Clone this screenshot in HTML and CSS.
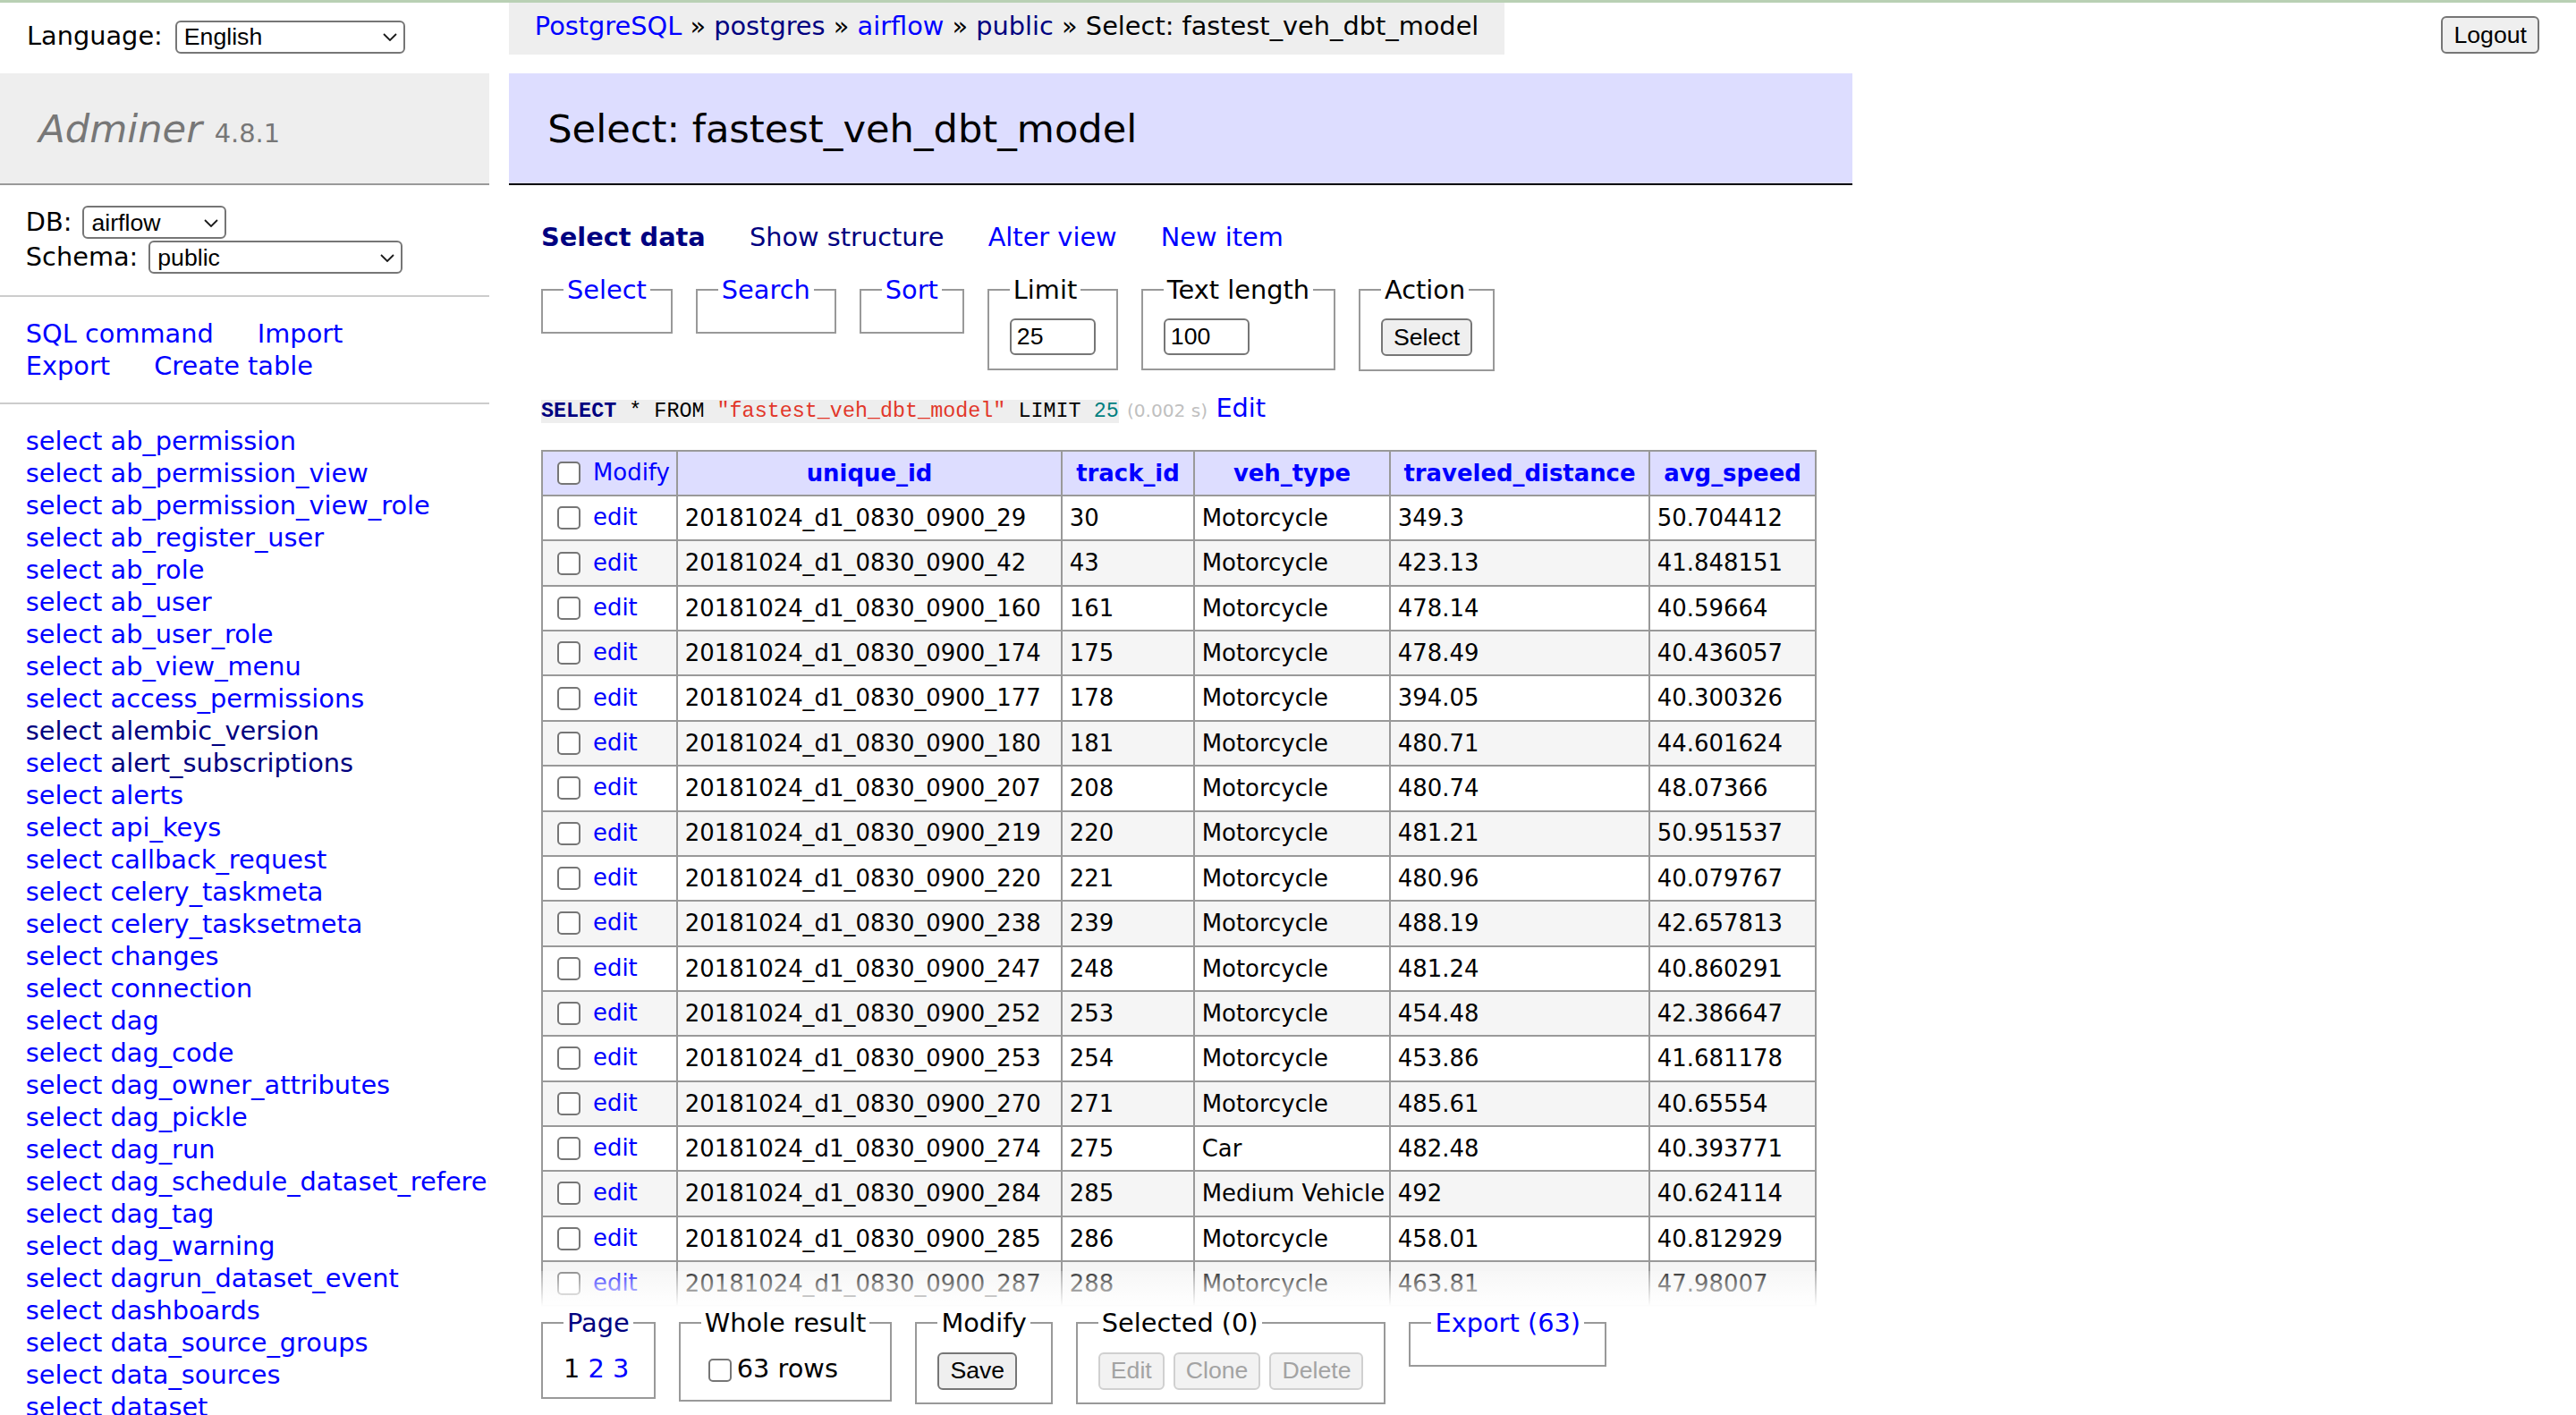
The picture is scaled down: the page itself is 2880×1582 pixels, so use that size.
FILE: index.html
```html
<!DOCTYPE html>
<html lang="en">
<head>
<meta charset="utf-8">
<title>Select: fastest_veh_dbt_model - PostgreSQL - Adminer</title>
<link rel="stylesheet" href="styles.css">
</head>
<body>
<div class="page">
  <aside class="menu">
    <form class="lang">
      <span class="lang-label">Language:</span>
      <span class="sel sel-lang"><select><option>English</option></select><svg viewBox="0 0 16 9"><path d="M1 1l7 7 7-7"/></svg></span>
    </form>
    <h1><a class="h1link" href="#">Adminer</a> <span class="version">4.8.1</span></h1>
    <form class="dbs">
      <div class="dbrow"><span>DB:</span><span class="sel sel-db"><select><option>airflow</option></select><svg viewBox="0 0 16 9"><path d="M1 1l7 7 7-7"/></svg></span></div>
      <div class="dbrow"><span>Schema:</span><span class="sel sel-schema"><select><option>public</option></select><svg viewBox="0 0 16 9"><path d="M1 1l7 7 7-7"/></svg></span></div>
    </form>
    <p class="side-links"><a href="#">SQL command</a> <a href="#">Import</a><br><a href="#">Export</a> <a href="#">Create table</a></p>
    <ul class="tables">
      <li><a href="#">select</a> <a href="#">ab_permission</a></li>
      <li><a href="#">select</a> <a href="#">ab_permission_view</a></li>
      <li><a href="#">select</a> <a href="#">ab_permission_view_role</a></li>
      <li><a href="#">select</a> <a href="#">ab_register_user</a></li>
      <li><a href="#">select</a> <a href="#">ab_role</a></li>
      <li><a href="#">select</a> <a href="#">ab_user</a></li>
      <li><a href="#">select</a> <a href="#">ab_user_role</a></li>
      <li><a href="#">select</a> <a href="#">ab_view_menu</a></li>
      <li><a href="#">select</a> <a href="#">access_permissions</a></li>
      <li><a class="v" href="#">select</a> <a class="v" href="#">alembic_version</a></li>
      <li><a href="#">select</a> <a class="v" href="#">alert_subscriptions</a></li>
      <li><a href="#">select</a> <a href="#">alerts</a></li>
      <li><a href="#">select</a> <a href="#">api_keys</a></li>
      <li><a href="#">select</a> <a href="#">callback_request</a></li>
      <li><a href="#">select</a> <a href="#">celery_taskmeta</a></li>
      <li><a href="#">select</a> <a href="#">celery_tasksetmeta</a></li>
      <li><a href="#">select</a> <a href="#">changes</a></li>
      <li><a href="#">select</a> <a href="#">connection</a></li>
      <li><a href="#">select</a> <a href="#">dag</a></li>
      <li><a href="#">select</a> <a href="#">dag_code</a></li>
      <li><a href="#">select</a> <a href="#">dag_owner_attributes</a></li>
      <li><a href="#">select</a> <a href="#">dag_pickle</a></li>
      <li><a href="#">select</a> <a href="#">dag_run</a></li>
      <li><a href="#">select</a> <a href="#">dag_schedule_dataset_reference</a></li>
      <li><a href="#">select</a> <a href="#">dag_tag</a></li>
      <li><a href="#">select</a> <a href="#">dag_warning</a></li>
      <li><a href="#">select</a> <a href="#">dagrun_dataset_event</a></li>
      <li><a href="#">select</a> <a href="#">dashboards</a></li>
      <li><a href="#">select</a> <a href="#">data_source_groups</a></li>
      <li><a href="#">select</a> <a href="#">data_sources</a></li>
      <li><a href="#">select</a> <a href="#">dataset</a></li>
    </ul>
  </aside>

  <main class="content">
    <nav class="breadcrumb"><a href="#">PostgreSQL</a> » <a class="v" href="#">postgres</a> » <a href="#">airflow</a> » <a class="v" href="#">public</a> » Select: fastest_veh_dbt_model</nav>
    <h2>Select: fastest_veh_dbt_model</h2>
    <div class="main">
      <p class="nav-links"><a class="v active" href="#">Select data</a> <a class="v" href="#">Show structure</a> <a href="#">Alter view</a> <a href="#">New item</a></p>

      <form class="filters">
        <fieldset class="fs-empty"><legend><a href="#">Select</a></legend></fieldset>
        <fieldset class="fs-empty"><legend><a href="#">Search</a></legend></fieldset>
        <fieldset class="fs-empty"><legend><a href="#">Sort</a></legend></fieldset>
        <fieldset><legend>Limit</legend><div class="fs-body"><input class="num" type="text" value="25"></div></fieldset>
        <fieldset><legend>Text length</legend><div class="fs-body"><input class="num" type="text" value="100"></div></fieldset>
        <fieldset><legend>Action</legend><div class="fs-body"><button type="button" class="btn">Select</button></div></fieldset>
      </form>

      <p class="sql"><code><b class="kw">SELECT</b> * FROM <span class="quo">"fastest_veh_dbt_model"</span> LIMIT <span class="numlit">25</span></code> <span class="time">(0.002 s)</span> <a href="#">Edit</a></p>

      <form class="results">
        <table class="data">
          <colgroup>
            <col class="c1"><col class="c2"><col class="c3"><col class="c4"><col class="c5"><col class="c6">
          </colgroup>
          <thead>
            <tr><td><input class="cb" type="checkbox"> <a href="#">Modify</a></td><th><a href="#">unique_id</a></th><th><a href="#">track_id</a></th><th><a href="#">veh_type</a></th><th><a href="#">traveled_distance</a></th><th><a href="#">avg_speed</a></th></tr>
          </thead>
          <tbody>
            <tr><td><input class="cb" type="checkbox"> <a href="#">edit</a></td><td>20181024_d1_0830_0900_29</td><td>30</td><td>Motorcycle</td><td>349.3</td><td>50.704412</td></tr>
            <tr><td><input class="cb" type="checkbox"> <a href="#">edit</a></td><td>20181024_d1_0830_0900_42</td><td>43</td><td>Motorcycle</td><td>423.13</td><td>41.848151</td></tr>
            <tr><td><input class="cb" type="checkbox"> <a href="#">edit</a></td><td>20181024_d1_0830_0900_160</td><td>161</td><td>Motorcycle</td><td>478.14</td><td>40.59664</td></tr>
            <tr><td><input class="cb" type="checkbox"> <a href="#">edit</a></td><td>20181024_d1_0830_0900_174</td><td>175</td><td>Motorcycle</td><td>478.49</td><td>40.436057</td></tr>
            <tr><td><input class="cb" type="checkbox"> <a href="#">edit</a></td><td>20181024_d1_0830_0900_177</td><td>178</td><td>Motorcycle</td><td>394.05</td><td>40.300326</td></tr>
            <tr><td><input class="cb" type="checkbox"> <a href="#">edit</a></td><td>20181024_d1_0830_0900_180</td><td>181</td><td>Motorcycle</td><td>480.71</td><td>44.601624</td></tr>
            <tr><td><input class="cb" type="checkbox"> <a href="#">edit</a></td><td>20181024_d1_0830_0900_207</td><td>208</td><td>Motorcycle</td><td>480.74</td><td>48.07366</td></tr>
            <tr><td><input class="cb" type="checkbox"> <a href="#">edit</a></td><td>20181024_d1_0830_0900_219</td><td>220</td><td>Motorcycle</td><td>481.21</td><td>50.951537</td></tr>
            <tr><td><input class="cb" type="checkbox"> <a href="#">edit</a></td><td>20181024_d1_0830_0900_220</td><td>221</td><td>Motorcycle</td><td>480.96</td><td>40.079767</td></tr>
            <tr><td><input class="cb" type="checkbox"> <a href="#">edit</a></td><td>20181024_d1_0830_0900_238</td><td>239</td><td>Motorcycle</td><td>488.19</td><td>42.657813</td></tr>
            <tr><td><input class="cb" type="checkbox"> <a href="#">edit</a></td><td>20181024_d1_0830_0900_247</td><td>248</td><td>Motorcycle</td><td>481.24</td><td>40.860291</td></tr>
            <tr><td><input class="cb" type="checkbox"> <a href="#">edit</a></td><td>20181024_d1_0830_0900_252</td><td>253</td><td>Motorcycle</td><td>454.48</td><td>42.386647</td></tr>
            <tr><td><input class="cb" type="checkbox"> <a href="#">edit</a></td><td>20181024_d1_0830_0900_253</td><td>254</td><td>Motorcycle</td><td>453.86</td><td>41.681178</td></tr>
            <tr><td><input class="cb" type="checkbox"> <a href="#">edit</a></td><td>20181024_d1_0830_0900_270</td><td>271</td><td>Motorcycle</td><td>485.61</td><td>40.65554</td></tr>
            <tr><td><input class="cb" type="checkbox"> <a href="#">edit</a></td><td>20181024_d1_0830_0900_274</td><td>275</td><td>Car</td><td>482.48</td><td>40.393771</td></tr>
            <tr><td><input class="cb" type="checkbox"> <a href="#">edit</a></td><td>20181024_d1_0830_0900_284</td><td>285</td><td>Medium Vehicle</td><td>492</td><td>40.624114</td></tr>
            <tr><td><input class="cb" type="checkbox"> <a href="#">edit</a></td><td>20181024_d1_0830_0900_285</td><td>286</td><td>Motorcycle</td><td>458.01</td><td>40.812929</td></tr>
            <tr><td><input class="cb" type="checkbox"> <a href="#">edit</a></td><td>20181024_d1_0830_0900_287</td><td>288</td><td>Motorcycle</td><td>463.81</td><td>47.98007</td></tr>
          </tbody>
        </table>

        <div class="footer">
          <div class="footer-inner">
            <fieldset><legend><a class="v" href="#">Page</a></legend><div class="fs-text">1 <a href="#">2</a> <a href="#">3</a></div></fieldset>
            <fieldset><legend>Whole result</legend><label class="fs-text"><input class="cb" type="checkbox">63 rows</label></fieldset>
            <fieldset><legend>Modify</legend><div class="fs-body"><button type="button" class="btn">Save</button></div></fieldset>
            <fieldset><legend>Selected (0)</legend><div class="fs-body gap"><button type="button" class="btn" disabled>Edit</button><button type="button" class="btn" disabled>Clone</button><button type="button" class="btn" disabled>Delete</button></div></fieldset>
            <fieldset class="fs-empty"><legend><a href="#">Export (63)</a></legend></fieldset>
          </div>
        </div>
      </form>
    </div>
  </main>

  <form class="logout"><button type="button" class="btn">Logout</button></form>
</div>
</body>
</html>
```

FILE: styles.css
```css
html, body {
  margin: 0;
}

body {
  font: 28.8px/1.25 "DejaVu Sans", Verdana, sans-serif;
  color: #000;
  background: #fff;
  border-top: 3px solid #b9d0b4;
}

a {
  color: blue;
  text-decoration: none;
}

a.v {
  color: navy;
}

.page {
  display: grid;
  grid-template-columns: 547px auto 1fr;
  column-gap: 22px;
  align-items: start;
}

/* ---------- sidebar ---------- */
.menu {
  width: 547px;
  padding-bottom: 60px;
}

.lang {
  display: flex;
  align-items: center;
  height: 79px;
  box-sizing: border-box;
  padding: 0 0 3px 30px;
  margin: 0;
}

.lang-label {
  margin-right: 14px;
}

.sel {
  position: relative;
  display: inline-block;
}

.sel select {
  appearance: none;
  -webkit-appearance: none;
  display: block;
  box-sizing: border-box;
  font: 26.67px "Liberation Sans", Arial, sans-serif;
  color: #000;
  background: #fff;
  border: 2px solid #767676;
  border-radius: 6px;
  height: 37px;
  padding: 0 36px 0 8px;
  margin: 0;
}

.sel svg {
  position: absolute;
  right: 9px;
  top: 50%;
  width: 16px;
  height: 9px;
  margin-top: -4px;
  pointer-events: none;
  fill: none;
  stroke: #1a1a1a;
  stroke-width: 1.8;
}

.sel-lang select { width: 257px; }
.sel-db select { width: 161px; }
.sel-schema select { width: 284px; }

h1 {
  margin: 0;
  font-size: 43.2px;
  line-height: 54px;
  padding: 34.56px 43.2px;
  border-bottom: 2px solid #999;
  background: #eee;
  font-weight: normal;
  color: #777;
  white-space: nowrap;
}

.h1link {
  color: #777;
  font-style: italic;
}

.version {
  font-size: 28.9px;
  line-height: 1;
  color: #777;
}

.dbs {
  margin: 0;
  padding: 22px 28.8px 23px;
  border-bottom: 2px solid #ccc;
}

.dbrow {
  display: flex;
  align-items: center;
  gap: 12px;
  height: 39px;
}

.side-links {
  margin: 0;
  padding: 23px 28.8px;
  border-bottom: 2px solid #ccc;
  line-height: 36px;
}

.side-links a {
  margin-right: 40px;
  white-space: nowrap;
}

.tables {
  margin: 0;
  padding: 23px 28.8px;
  list-style: none;
  white-space: nowrap;
  overflow: hidden;
  line-height: 36px;
}

/* ---------- content ---------- */
.content {
  min-width: 0;
}

.breadcrumb {
  width: fit-content;
  background: #eee;
  height: 57.6px;
  line-height: 53px;
  padding: 0 28.8px;
  white-space: nowrap;
  box-sizing: border-box;
}

h2 {
  margin: 21.4px 0 40px;
  font-size: 43.2px;
  line-height: 54px;
  padding: 34.56px 43.2px;
  border-bottom: 2px solid #000;
  background: #ddf;
  font-weight: normal;
  white-space: nowrap;
}

.main {
  padding: 0 40px 0 36px;
}

.nav-links {
  margin: 0;
  line-height: 36px;
  white-space: nowrap;
}

.nav-links a {
  margin-right: 40px;
}

.active {
  font-weight: bold;
}

.filters {
  display: flex;
  align-items: flex-start;
  gap: 26px;
  margin: 23px 0 0;
}

fieldset {
  margin: 0;
  padding: 14.4px 23px;
  border: 2px solid #999;
  min-width: 0;
}

legend {
  padding: 0 4px;
  line-height: 36px;
  white-space: nowrap;
}

.fs-body {
  display: flex;
  align-items: center;
}

.fs-body.gap {
  gap: 10px;
}

.fs-text {
  display: block;
  line-height: 36px;
  white-space: nowrap;
}

.num {
  font: 26.67px "Liberation Sans", Arial, sans-serif;
  width: 96px;
  height: 41px;
  box-sizing: border-box;
  border: 2px solid #767676;
  border-radius: 6px;
  padding: 0 6px;
  margin: 0;
  color: #000;
  background: #fff;
}

.btn {
  font: 26.67px "Liberation Sans", Arial, sans-serif;
  height: 42px;
  box-sizing: border-box;
  padding: 0 12px;
  border: 2px solid #767676;
  border-radius: 6px;
  background: #efefef;
  color: #000;
  margin: 0;
}

.btn:disabled {
  color: #a3a3a3;
  border-color: #d0d0d0;
  background: #f2f2f2;
}

.sql {
  margin: 23px 0 0;
  line-height: 36px;
  white-space: nowrap;
}

.sql code {
  font: 23.4px "Liberation Mono", "Courier New", monospace;
  background: #eee;
}

.kw {
  color: navy;
  font-weight: bold;
}

.quo {
  color: #e2382a;
}

.numlit {
  color: #007f7f;
}

.time {
  color: silver;
  font-size: 20.16px;
}

/* ---------- table ---------- */
.results {
  margin: 0;
}

.data {
  border-collapse: collapse;
  table-layout: fixed;
  width: 1424px;
  font-size: 25.92px;
  line-height: 32.4px;
  margin: 25.92px 0 0;
  white-space: nowrap;
}

.data .c1 { width: 151px; }
.data .c2 { width: 430px; }
.data .c3 { width: 148px; }
.data .c4 { width: 219px; }
.data .c5 { width: 290px; }
.data .c6 { width: 186px; }

.data td,
.data th {
  border: 2px solid #999;
  padding: 5.18px 7.78px;
  vertical-align: middle;
  text-align: left;
}

.data thead td,
.data thead th {
  background: #ddf;
}

.data thead th {
  text-align: center;
  padding: 5.18px 12.96px;
  font-weight: bold;
}

.data tbody tr:nth-child(2n) {
  background: #f5f5f5;
}

.cb {
  appearance: none;
  -webkit-appearance: none;
  box-sizing: border-box;
  width: 26px;
  height: 26px;
  margin: 6px 6px 6px 8px;
  border: 2px solid #767676;
  border-radius: 5px;
  background: #fff;
  vertical-align: middle;
}

/* ---------- footer overlapping the last row ---------- */
.footer {
  position: relative;
  margin-top: -40px;
  margin-right: -40px;
}

.footer::before {
  content: "";
  display: block;
  height: 40px;
  background: linear-gradient(rgba(255, 255, 255, 0.2), #fff);
}

.footer-inner {
  background: #fff;
  padding: 0 0 14.4px;
  display: flex;
  align-items: flex-start;
  gap: 26px;
}

/* ---------- logout ---------- */
.logout {
  justify-self: end;
  margin: 15px 41px 0 0;
}
```
